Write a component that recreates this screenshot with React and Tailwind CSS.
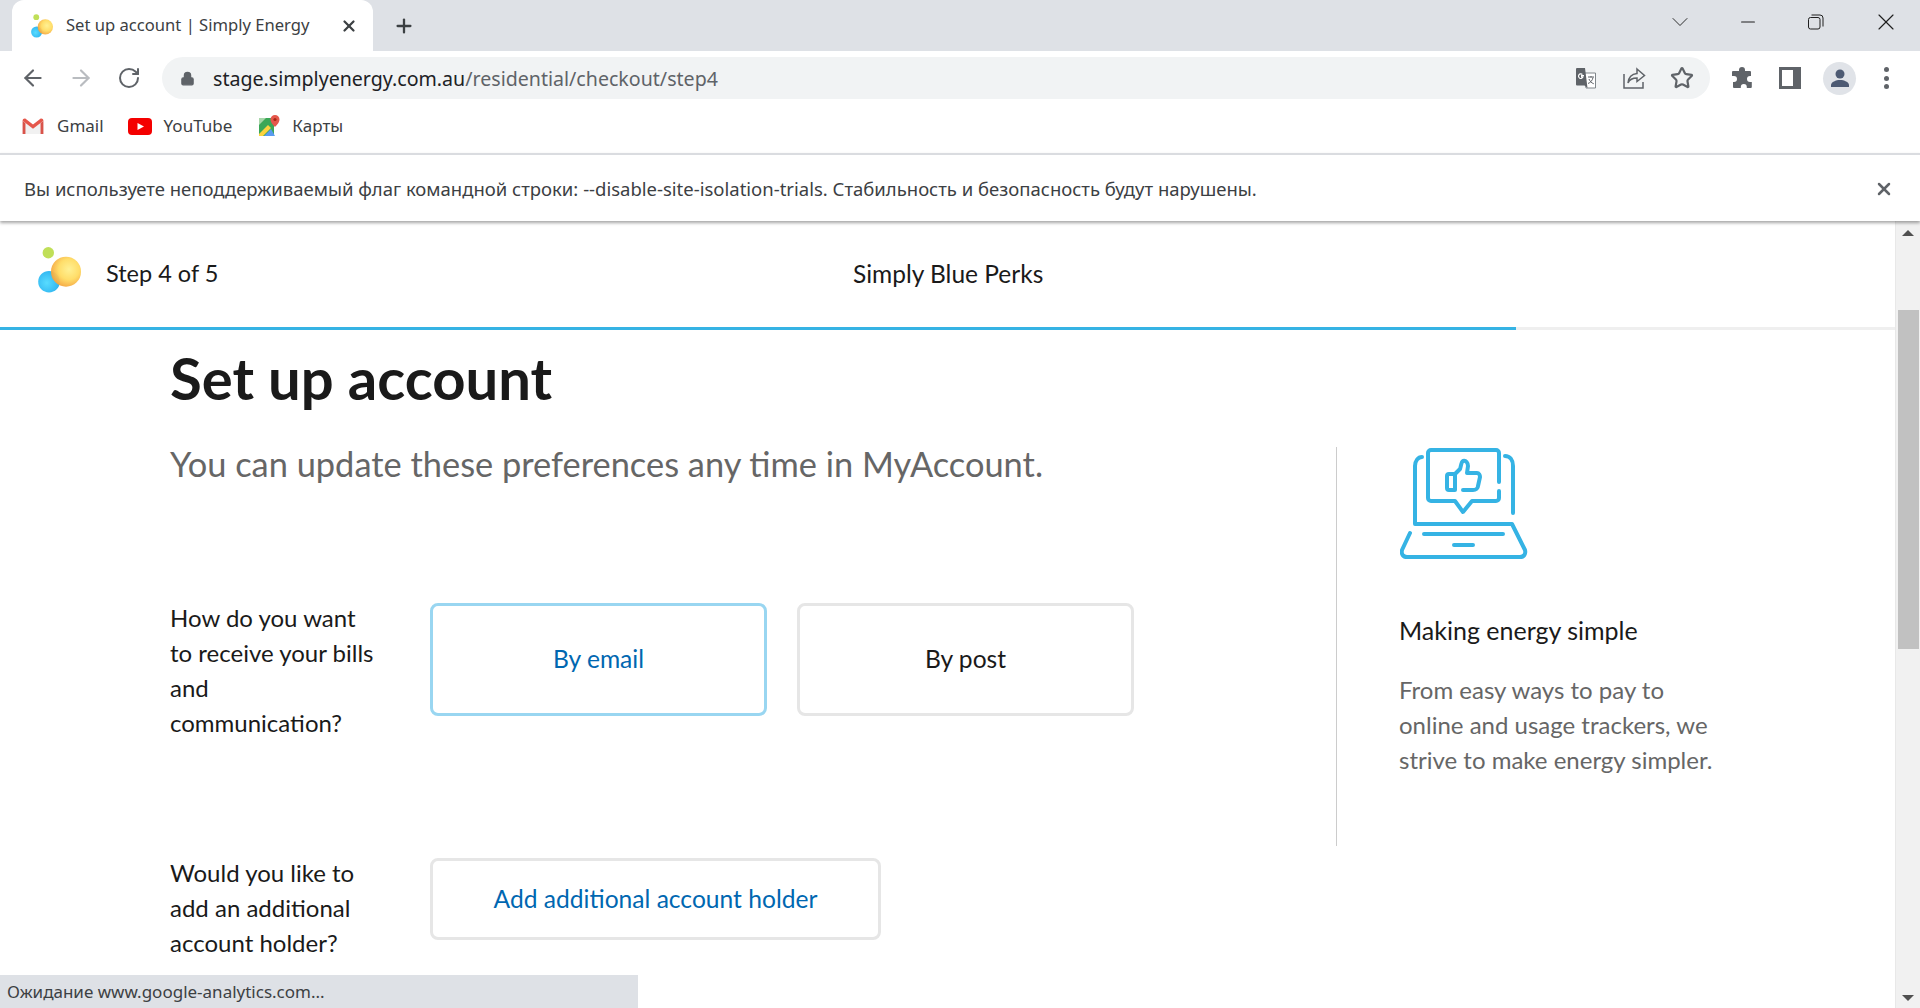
import { ArrowLeft, ArrowRight, RotateCw, Lock, Star, X, Plus, ChevronDown, Minus } from 'lucide-react'

const chromeFont = "font-['Noto_Sans',sans-serif]"

function BubbleLogo({ className, id }) {
  return (
    <svg viewBox="0 0 43 46" className={className}>
      <defs>
        <radialGradient id={`${id}-y`} cx="0.6" cy="0.42" r="0.62">
          <stop offset="0" stopColor="#fff08e" />
          <stop offset="0.55" stopColor="#ffdc62" />
          <stop offset="1" stopColor="#f4a43c" />
        </radialGradient>
        <radialGradient id={`${id}-b`} cx="0.4" cy="0.55" r="0.6">
          <stop offset="0" stopColor="#58dcff" />
          <stop offset="1" stopColor="#2fb4f0" />
        </radialGradient>
      </defs>
      <circle cx="10.300" cy="5.700" r="5.700" fill="#c0df58" />
      <circle cx="11" cy="34.700" r="10.800" fill={`url(#${id}-b)`} />
      <circle cx="28" cy="24.700" r="15" fill={`url(#${id}-y)`} fillOpacity="0.95" />
    </svg>
  )
}

function GmailIcon() {
  return (
    <svg viewBox="0 0 24 18" className="w-6 h-[17px]">
      <path d="M1 17V2l11 8 11-8v15z" fill="#f1f1f1" />
      <path d="M1 17V3l3 2.500V17z" fill="#d9534a" />
      <path d="M23 17V3l-3 2.500V17z" fill="#d9534a" />
      <path d="M1 3c0-2 2-3 3.500-2L12 7 19.500 1C21 0 23 1 23 3l-11 8.500z" fill="#e5574b" />
    </svg>
  )
}

function YouTubeIcon() {
  return (
    <svg viewBox="0 0 24 17" className="w-6 h-[17px]">
      <rect width="24" height="17" rx="4" fill="#f40000" />
      <path d="M9.500 5l6.500 3.500-6.500 3.500z" fill="#fff" />
    </svg>
  )
}

function MapsIcon() {
  return (
    <svg viewBox="0 0 22 22" className="w-[22px] h-[22px]">
      <path d="M1 3h15v18H1z" fill="#3aa757" />
      <path d="M1 3h7L1 10z" fill="#a6d6a8" />
      <path d="M1 19l9-9 3 3-8 8H1z" fill="#fbd33e" />
      <path d="M6 21l7-7 4 7z" fill="#5a9bf0" />
      <path d="M17 0a4.500 4.500 0 0 0-4.500 4.500C12.500 8 17 12 17 12s4.500-4 4.500-7.500A4.500 4.500 0 0 0 17 0z" fill="#e5574b" />
      <circle cx="17" cy="4.500" r="1.600" fill="#a52714" />
    </svg>
  )
}

function TranslateIcon() {
  return (
    <svg viewBox="0 0 22 22" className="w-[22px] h-[22px]">
      <path d="M9 6h11.500v15H11z" fill="#fff" stroke="#80868b" strokeWidth="1" />
      <path d="M1 2a1 1 0 0 1 1-1h8l2.500 20-3-2.500H2a1 1 0 0 1-1-1z" fill="#5f6368" />
      <path d="M9 8.500H6.600v1.400H8a2.300 2.300 0 1 1-.6-2.400" fill="none" stroke="#fff" strokeWidth="1.200" />
      <path d="M13 10h6M16 9v1.500M18 10.500c-.5 3-2.500 5-5 6M14 12c.7 2 2.500 4 4.800 4.800" fill="none" stroke="#5f6368" strokeWidth="1" />
    </svg>
  )
}

function ShareIcon() {
  return (
    <svg viewBox="0 0 24 22" className="w-6 h-[22px]" fill="none" stroke="#5f6368" strokeWidth="1.500">
      <path d="M2 7v14h19v-6" />
      <path d="M15 2l7.500 6.500-7.500 6V11c-5 0-7.500 1.500-9 5 .5-5 3-9 9-9.500z" />
    </svg>
  )
}

function PuzzleIcon() {
  return (
    <svg viewBox="0 0 22 22" className="w-[22px] h-[22px]" fill="#5f6368">
      <path d="M8 3a3 3 0 0 1 6 0v1h5a1 1 0 0 1 1 1v4h-1a3 3 0 0 0 0 6h1.800a1.200 1.200 0 0 1 0 .5V20a1 1 0 0 1-1 1h-4v-1a3 3 0 0 0-6 0v1H3a1 1 0 0 1-1-1v-5h1a3 3 0 0 0 0-6H1V5a1 1 0 0 1 1-1h6z" />
    </svg>
  )
}

function SidePanelIcon() {
  return (
    <div className="w-[22px] h-[22px] bg-[#5f6368] flex justify-start">
      <div className="w-[11px] h-[16px] mt-[3px] ml-[3px] bg-white" />
    </div>
  )
}

function AvatarIcon() {
  return (
    <div className="w-[33px] h-[33px] rounded-full bg-[#e0e3e8] flex items-center justify-center">
      <svg viewBox="0 0 20 20" className="w-[20px] h-[20px]" fill="#4d5a73">
        <circle cx="10" cy="6" r="4.500" />
        <path d="M1 19v-2c0-3 5-5 9-5s9 2 9 5v2z" />
      </svg>
    </div>
  )
}

function RestoreIcon() {
  return (
    <svg viewBox="0 0 16 16" className="w-[16px] h-[16px]" fill="none" stroke="#1f1f1f" strokeWidth="1">
      <rect x="0.500" y="3.500" width="11.500" height="11.500" rx="2" />
      <path d="M3.500 1h8.500a3 3 0 0 1 3 3v8.500" />
    </svg>
  )
}

function LaptopThumbIcon() {
  return (
    <svg viewBox="20 18 128 112" className="w-[128px] h-[112px]" fill="none" stroke="#35b3e4" strokeWidth="4" strokeLinecap="round" strokeLinejoin="round">
      <path d="M119 52V23a3 3 0 0 0-3-3H51a3 3 0 0 0-3 3v45a3 3 0 0 0 3 3h24l8 11 9-11h24a3 3 0 0 0 3-3v-7" />
      <path d="M42 27c-4 0-7 4-7 9v58h97l13 26c1 4-1 7-5 7H27c-4 0-6-3-5-7l8-17" />
      <path d="M125 26c5 0 8 4 8 10v47" />
      <path d="M44 104h79M74 115h19" />
      <path d="M75 44h-6a2 2 0 0 0-2 2v12a2 2 0 0 0 2 2h6zM75 44l5-5c1-2 1-7 3-8 3-1 5 2 5 5l-1 7h10c2 0 3 2 3 4l-2 9c0 2-2 4-5 4H83" />
    </svg>
  )
}

function OptionButton({ className, children }) {
  return (
    <button className={`rounded-lg border-[3px] text-[24.600px] flex items-center justify-center bg-white ${className}`}>
      {children}
    </button>
  )
}

function FormRow({ className, lines, children }) {
  return (
    <div className={`flex ${className}`}>
      <p className="w-[260px] -mt-[3px] text-[24px] leading-[35px] text-[#1a1a1a]">
        {lines.map(line => <span key={line} className="block">{line}</span>)}
      </p>
      {children}
    </div>
  )
}

export default function App() {
  return (
    <div className="relative h-screen overflow-hidden flex flex-col bg-white">
      {/* tab strip */}
      <div className={`h-[51px] shrink-0 bg-[#dee1e6] flex items-start ${chromeFont}`}>
        <div className="ml-3 mt-0 h-[51px] w-[361px] rounded-t-xl bg-white flex items-center pl-[19px] pr-[15px]">
          <BubbleLogo id="fav" className="w-[22px] h-[24px]" />
          <span className="ml-[13px] text-[16.600px] text-[#3c4043] whitespace-nowrap">Set up account | Simply Energy</span>
          <X className="ml-auto w-[18px] h-[18px] text-[#3c4043]" strokeWidth={3} />
        </div>
        <Plus className="ml-[20px] mt-[15px] w-[22px] h-[22px] text-[#3c4043]" strokeWidth={2.500} />
        <div className="ml-auto flex items-center h-[44px] text-[#1f1f1f]">
          <ChevronDown className="w-[28px] h-[28px] mr-[43px]" strokeWidth={0.800} />
          <Minus className="w-[22px] h-[22px] mr-[49px]" strokeWidth={1.200} />
          <RestoreIcon />
          <X className="ml-[48px] mr-[20px] w-[28px] h-[28px]" strokeWidth={1} />
        </div>
      </div>

      {/* toolbar */}
      <div className={`h-[54px] shrink-0 bg-white flex items-center pl-[20px] pr-[20px] ${chromeFont}`}>
        <ArrowLeft className="w-[26px] h-[26px] text-[#5f6368]" strokeWidth={2} />
        <ArrowRight className="ml-[22px] w-[26px] h-[26px] text-[#b9bcc0]" strokeWidth={2} />
        <RotateCw className="ml-[23px] w-[24px] h-[24px] text-[#5f6368]" strokeWidth={2} />
        <div className="ml-[21px] w-[1548px] h-[42px] rounded-full bg-[#f1f3f4] flex items-center pl-[18px] pr-[16px]">
          <Lock className="w-[15px] h-[15px] text-[#5f6368] fill-[#5f6368]" />
          <span className="ml-[18px] mt-[1px] text-[19.600px] text-[#202124] whitespace-nowrap">
            stage.simplyenergy.com.au<span className="text-[#5f6368]">/residential/checkout/step4</span>
          </span>
          <div className="ml-auto flex items-center">
            <TranslateIcon />
            <div className="ml-[25px]"><ShareIcon /></div>
            <Star className="ml-[24px] w-[24px] h-[24px] text-[#5f6368]" strokeWidth={2.200} />
          </div>
        </div>
        <div className="ml-[21px] flex items-center">
          <PuzzleIcon />
          <div className="ml-[26px]"><SidePanelIcon /></div>
          <div className="ml-[22px]"><AvatarIcon /></div>
          <div className="ml-[28px] flex flex-col gap-[3.500px]">
            <span className="w-[5px] h-[5px] rounded-full bg-[#5f6368]" />
            <span className="w-[5px] h-[5px] rounded-full bg-[#5f6368]" />
            <span className="w-[5px] h-[5px] rounded-full bg-[#5f6368]" />
          </div>
        </div>
      </div>

      {/* bookmarks */}
      <div className={`h-[48px] pb-[6px] shrink-0 bg-white flex items-center pl-[21px] text-[17px] text-[#3c4043] ${chromeFont}`}>
        <GmailIcon />
        <span className="ml-[12px]">Gmail</span>
        <div className="ml-[24px]"><YouTubeIcon /></div>
        <span className="ml-[12px]">YouTube</span>
        <div className="ml-[26px]"><MapsIcon /></div>
        <span className="ml-[12px]">Карты</span>
      </div>

      {/* infobar */}
      <div className={`h-[68px] pt-[1px] shrink-0 bg-white border-t-2 border-[#dadce0] flex items-center pl-[24px] pr-[26px] text-[18.500px] text-[#3c4043] shadow-[0_2px_3px_rgba(0,0,0,0.35)] z-10 ${chromeFont}`}>
        <span className="whitespace-nowrap">Вы используете неподдерживаемый флаг командной строки: --disable-site-isolation-trials. Стабильность и безопасность будут нарушены.</span>
        <X className="ml-auto w-[20px] h-[20px] text-[#5f6368]" strokeWidth={3} />
      </div>

      {/* page */}
      <div className="flex-1 min-h-0 flex font-['Lato','Noto_Sans',sans-serif]">
        <div className="flex-1 min-w-0 overflow-hidden">
          <header className="h-[109px] border-b-[3px] border-[#efefef] relative flex items-center">
            <BubbleLogo id="logo" className="ml-[38px] -mt-[8px] w-[43px] h-[46px]" />
            <span className="ml-[25px] text-[23.500px] text-[#1a1a1a]">Step 4 of 5</span>
            <span className="absolute left-[853px] text-[24.500px] text-[#1a1a1a]">Simply Blue Perks</span>
            <div className="absolute left-0 bottom-[-3px] h-[3px] w-[1516px] bg-[#35b3e4]" />
          </header>

          <div className="pl-[170px] flex">
            <div className="w-[1166px] shrink-0">
              <h1 className="mt-[13px] text-[58px] leading-[70px] font-bold text-[#1a1a1a]">Set up account</h1>
              <p className="mt-[28px] text-[34.400px] leading-[46px] text-[#666666]">You can update these preferences any time in MyAccount.</p>

              <FormRow className="mt-[116px]" lines={['How do you want', 'to receive your bills', 'and', 'communication?']}>
                <div className="flex gap-[30px] h-[113px]">
                  <OptionButton className="w-[337px] border-[#99d6f1] text-[#0067b1]">By email</OptionButton>
                  <OptionButton className="w-[337px] border-[#e6e6e6] text-[#1a1a1a]">By post</OptionButton>
                </div>
              </FormRow>

              <FormRow className="mt-[118px]" lines={['Would you like to', 'add an additional', 'account holder?']}>
                <OptionButton className="w-[451px] h-[82px] border-[#e6e6e6] text-[#0067b1]">Add additional account holder</OptionButton>
              </FormRow>
            </div>

            <aside className="mt-[117px] h-[399px] border-l border-[#cccccc] pl-[62px] w-[360px] shrink-0">
              <div className="mt-[1px] ml-[1px]"><LaptopThumbIcon /></div>
              <h2 className="mt-[53px] text-[25px] leading-[35px] text-[#1a1a1a] whitespace-nowrap">Making energy simple</h2>
              <p className="mt-[24px] text-[24px] leading-[35px] text-[#666666] whitespace-nowrap">
                <span className="block">From easy ways to pay to</span>
                <span className="block">online and usage trackers, we</span>
                <span className="block">strive to make energy simpler.</span>
              </p>
            </aside>
          </div>
        </div>

        {/* scrollbar */}
        <div className="w-[25px] shrink-0 bg-[#f1f1f1] border-l border-[#e8e8e8] flex flex-col items-center relative">
          <div className="mt-[9px] w-0 h-0 border-x-[6px] border-x-transparent border-b-[6px] border-b-[#505050]" />
          <div className="mt-[74px] w-[21px] h-[339px] bg-[#c1c1c1]" />
          <div className="absolute bottom-[7px] w-0 h-0 border-x-[6px] border-x-transparent border-t-[6px] border-t-[#505050]" />
        </div>
      </div>

      {/* status bubble */}
      <div className={`absolute left-0 bottom-0 w-[638px] h-[33px] bg-[#dee1e6] flex items-center pl-[7px] text-[17px] text-[#3c4043] ${chromeFont}`}>
        Ожидание www.google-analytics.com...
      </div>
    </div>
  )
}
